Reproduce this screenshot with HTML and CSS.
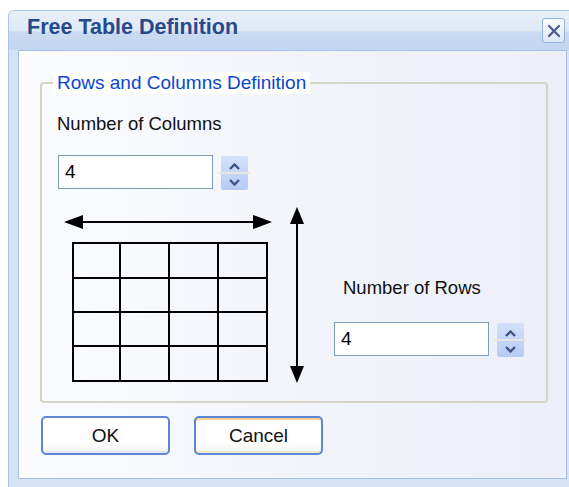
FILE: index.html
```html
<!DOCTYPE html>
<html lang="en">
<head>
    <meta charset="UTF-8">
    <title>Free Table Definition</title>
    <link rel="stylesheet" href="styles.css">
</head>
<body>
    <div class="window">
        <div class="titlebar">
            <span class="title">Free Table Definition</span>
            <button class="close" title="Close">
                <svg width="14" height="14" viewBox="0 0 14 14"><path d="M2 2 L12 12 M12 2 L2 12" stroke="#4a5c8e" stroke-width="2.2" stroke-linecap="round"/></svg>
            </button>
        </div>
        <div class="client">
            <fieldset class="group">
                <legend>Rows and Columns Definition</legend>
                <div class="group-body">
                    <p class="label">Number of Columns</p>
                    <div class="field cols">
                        <input type="text" value="4">
                        <div class="spinner">
                            <span class="spin-up"><svg width="11" height="7" viewBox="0 0 11 7"><path d="M1 6 L5.5 1.5 L10 6" fill="none" stroke="#3f5487" stroke-width="2.4"/></svg></span>
                            <span class="spin-down"><svg width="11" height="7" viewBox="0 0 11 7"><path d="M1 1 L5.5 5.5 L10 1" fill="none" stroke="#3f5487" stroke-width="2.4"/></svg></span>
                        </div>
                    </div>
                    <div class="lower">
                        <svg class="diagram" width="245" height="180" viewBox="0 0 245 180">
                            <g stroke="#000" stroke-width="2" fill="none">
                                <line x1="18" y1="17" x2="198" y2="17"/>
                                <line x1="237" y1="16" x2="237" y2="164"/>
                                <rect x="13" y="38" width="194" height="138"/>
                                <line x1="60" y1="38" x2="60" y2="176"/>
                                <line x1="109" y1="38" x2="109" y2="176"/>
                                <line x1="158" y1="38" x2="158" y2="176"/>
                                <line x1="13" y1="73" x2="207" y2="73"/>
                                <line x1="13" y1="107" x2="207" y2="107"/>
                                <line x1="13" y1="141" x2="207" y2="141"/>
                            </g>
                            <g fill="#000">
                                <polygon points="4,17 23,10 23,24"/>
                                <polygon points="212,17 193,10 193,24"/>
                                <polygon points="237,2 230,19 244,19"/>
                                <polygon points="237,178 230,161 244,161"/>
                            </g>
                        </svg>
                        <div class="rows-col">
                            <p class="label">Number of Rows</p>
                            <div class="field">
                                <input type="text" value="4">
                                <div class="spinner">
                                    <span class="spin-up"><svg width="11" height="7" viewBox="0 0 11 7"><path d="M1 6 L5.5 1.5 L10 6" fill="none" stroke="#3f5487" stroke-width="2.4"/></svg></span>
                                    <span class="spin-down"><svg width="11" height="7" viewBox="0 0 11 7"><path d="M1 1 L5.5 5.5 L10 1" fill="none" stroke="#3f5487" stroke-width="2.4"/></svg></span>
                                </div>
                            </div>
                        </div>
                    </div>
                </div>
            </fieldset>
            <div class="buttons">
                <button class="btn">OK</button>
                <button class="btn cancel">Cancel</button>
            </div>
        </div>
    </div>
</body>
</html>
```

FILE: styles.css
```css
body {
    margin: 0;
    background-color: #ffffff;
    font-family: 'Liberation Sans', Arial, sans-serif;
}

.window {
    margin: 10px 0 0 8px;
    width: 561px;
    height: 477px;
    box-sizing: border-box;
    background-color: #d6e3f5;
    border-top: 1px solid #a9c4ea;
    border-left: 1px solid #a9c4ea;
    border-radius: 6px 0 0 0;
    display: flex;
    flex-direction: column;
    overflow: hidden;
}

.titlebar {
    height: 39px;
    flex-shrink: 0;
    display: flex;
    align-items: flex-start;
    padding: 0 4px 0 18px;
    background: linear-gradient(#e8eff9 0, #dfe8f6 20px, #c9daf2 21px, #c4d6f0 100%);
}

.title {
    font-size: 21.5px;
    line-height: 24px;
    font-weight: bold;
    color: #28498a;
    padding-top: 4px;
}

.close {
    margin-left: auto;
    margin-top: 7px;
    width: 23px;
    height: 25px;
    padding: 0;
    border: 1px solid #94b2e0;
    border-radius: 3px;
    background: linear-gradient(#fafcff, #dde7f7);
    display: flex;
    align-items: center;
    justify-content: center;
}

.client {
    margin-left: 9px;
    width: 549px;
    height: 429px;
    box-sizing: border-box;
    border: 1px solid #a3c0ea;
    background: linear-gradient(to right, #fbfcfe, #f3f5fb 45%, #eceff8);
}

.group {
    margin: 21px 0 0 21px;
    width: 508px;
    box-sizing: border-box;
    border: 2px solid #d5d4c7;
    border-radius: 4px;
    padding: 0 0 16px 11px;
    min-width: 0;
}

.group legend {
    padding: 0 4px;
    font-size: 19px;
    line-height: 22px;
    color: #0a46d0;
    background-color: #ffffff;
}

.group-body {
    padding-left: 4px;
}

.label {
    margin: 0;
    font-size: 18.5px;
    line-height: 22px;
    color: #111111;
}

.group-body > .label {
    margin-top: 19px;
}

.field {
    display: flex;
    align-items: flex-start;
}

.cols {
    margin-top: 20px;
    margin-left: 1px;
}

.field input {
    width: 155px;
    height: 34px;
    box-sizing: border-box;
    border: 1px solid #7f9db9;
    padding: 0 6px;
    font-family: 'Liberation Sans', Arial, sans-serif;
    font-size: 19px;
    color: #000000;
    background-color: #ffffff;
    outline: none;
}

.spinner {
    position: relative;
    margin: 1px 0 0 8px;
    width: 27px;
    height: 34px;
    border-radius: 2px;
    display: flex;
    flex-direction: column;
    background: linear-gradient(#d3e1fb, #b6cbf4);
}

.spinner::after {
    content: '';
    position: absolute;
    left: -3px;
    right: -2px;
    top: 16px;
    height: 2px;
    background-color: #e6e7e0;
}

.spin-up, .spin-down {
    flex: 1;
    display: flex;
    align-items: center;
    justify-content: center;
}

.spin-up {
    padding-top: 2px;
}

.lower {
    display: flex;
    margin-top: 15px;
}

.diagram {
    display: block;
    margin-left: 3px;
}

.rows-col {
    margin-left: 29px;
}

.rows-col .label {
    margin-top: 72px;
    padding-left: 9px;
}

.rows-col .field {
    margin-top: 23px;
}

.buttons {
    display: flex;
    gap: 24px;
    margin: 13px 0 0 22px;
}

.btn {
    width: 129px;
    height: 39px;
    border: 2px solid #5a88d6;
    border-radius: 5px;
    background: linear-gradient(#ffffff 70%, #f1f1ec);
    box-shadow: inset 0 -2px 0 #e4e8f2;
    font-family: 'Liberation Sans', Arial, sans-serif;
    font-size: 19px;
    color: #111111;
    padding: 0;
}

.cancel {
    box-shadow: inset 0 2px 0 #fbd08f, inset 0 -2px 0 #efe6cf;
}
```
